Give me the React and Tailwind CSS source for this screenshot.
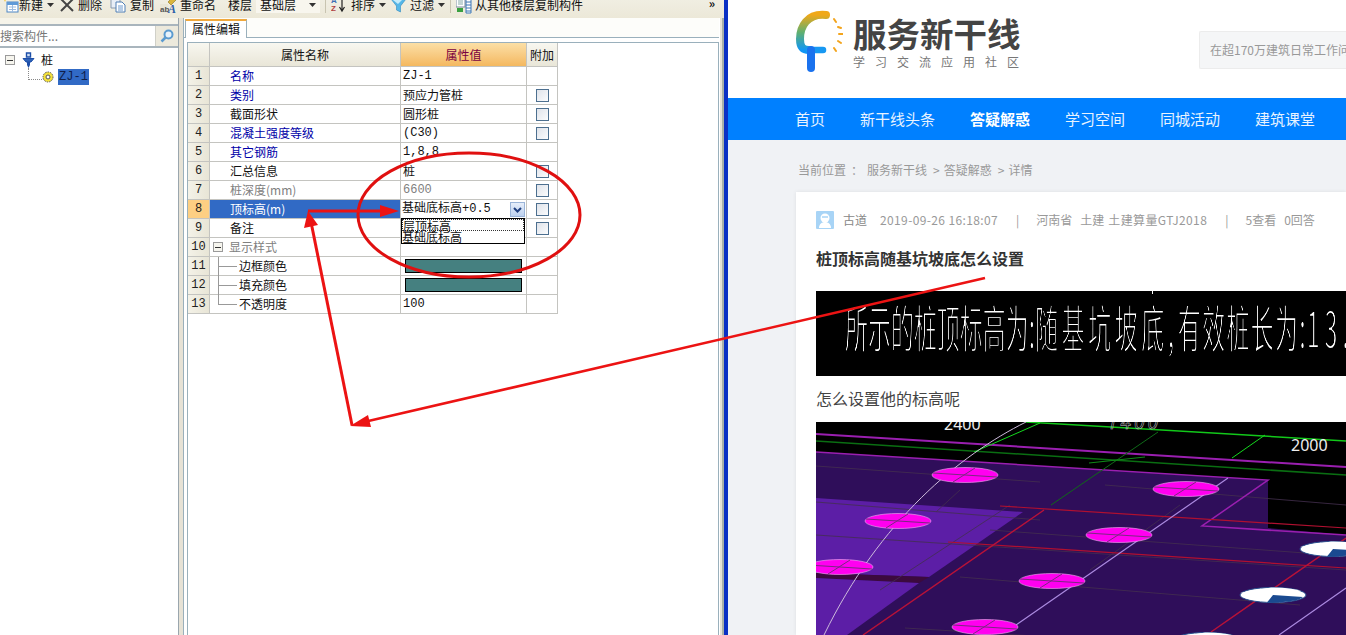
import React from "react";

const Caret = () => (
  <svg width="7" height="4" viewBox="0 0 7 4" className="shrink-0"><path d="M0 0h7L3.500 4z" fill="#333" /></svg>
);

const NewIcon = () => (
  <svg width="17" height="18" viewBox="0 0 17 18" className="shrink-0">
    <path d="M3 0l1 2 2 .5-2 1L3 6 2 3.500 0 2.500 2 2z" fill="#f2c230" />
    <rect x="5" y="6" width="11" height="10" fill="#fff" stroke="#4d86c4" />
    <rect x="5" y="6" width="11" height="3" fill="#5f9ad8" />
    <path d="M7 11h7M7 13.500h7M10.500 9v7" stroke="#9cbbe0" />
  </svg>
);
const XIcon = () => (
  <svg width="14" height="14" viewBox="0 0 14 14" className="shrink-0"><path d="M1 1l12 12M13 1L1 13" stroke="#444" strokeWidth="2" /></svg>
);
const CopyIcon = () => (
  <svg width="16" height="16" viewBox="0 0 16 16" className="shrink-0">
    <path d="M1 1h7l2 2v8H1z" fill="#e8eef6" stroke="#8a9bb0" />
    <path d="M6 5h6l3 3v7H6z" fill="#fff" stroke="#4f7fb5" />
    <path d="M8 9h5M8 11h5M8 13h5" stroke="#6d9ace" />
  </svg>
);
const RenameIcon = () => (
  <svg width="18" height="18" viewBox="0 0 18 18" className="shrink-0">
    <path d="M8 6l6-6 3 3-6 6z" fill="#d9b53d" stroke="#8c7420" strokeWidth=".6" />
    <path d="M12 0l4 4" stroke="#6ea04a" strokeWidth="1.500" />
    <rect x="0" y="8" width="8" height="9" fill="#e9e6d6" />
    <text x="0" y="16" fontSize="8" fontWeight="700" fill="#555" fontFamily="Liberation Sans">ab</text>
    <text x="8" y="17" fontSize="12" fontWeight="700" fontStyle="italic" fill="#2a5fa8" fontFamily="Liberation Serif">A</text>
  </svg>
);
const SortIcon = () => (
  <svg width="15" height="18" viewBox="0 0 15 18" className="shrink-0">
    <text x="0" y="7" fontSize="8" fontWeight="700" fill="#3a6fb5" fontFamily="Liberation Sans">A</text>
    <text x="0" y="15" fontSize="8" fontWeight="700" fill="#b04040" fontFamily="Liberation Sans">Z</text>
    <path d="M11 1v13M8.500 11l2.500 4 2.500-4" fill="none" stroke="#222" strokeWidth="1.200" />
  </svg>
);
const FilterIcon = () => (
  <svg width="15" height="15" viewBox="0 0 15 15" className="shrink-0">
    <path d="M0 1h15L9.500 8v6l-4-2V8z" fill="#55b7e8" stroke="#3289bd" strokeWidth=".6" />
    <path d="M2 2h9L7 6z" fill="#c5ecfb" />
  </svg>
);
const CopyFromIcon = () => (
  <svg width="16" height="18" viewBox="0 0 16 18" className="shrink-0">
    <rect x="0" y="1" width="9" height="10" fill="#fff" stroke="#7b8a9c" />
    <path d="M2 4h5M2 6h5M2 8h5" stroke="#8aa" />
    <path d="M1 12h6v4H1z" fill="#3aa040" />
    <path d="M10 3h5v14h-5z" fill="#fff" stroke="#3c76b5" />
    <path d="M10 6h5M10 9h5M10 12h5M10 15h5" stroke="#3c76b5" />
  </svg>
);

const Check = () => (
  <div className="w-[13px] h-[13px] border border-[#4c6f8f] bg-gradient-to-br from-[#dfe3ea] to-[#fbfcfd]" />
);

const Expander = () => (
  <div className="w-[10px] h-[10px] border border-[#9a9a9a] bg-[#f6f5ee] flex items-center justify-center shrink-0">
    <div className="w-[6px] h-px bg-[#333]" />
  </div>
);

const mono = "font-['Liberation_Mono','Noto_Sans_CJK_SC',monospace]";

const rows = [
  { n: "1", name: "名称", cls: "text-[#0000a8]", val: "ZJ-1", monoVal: true },
  { n: "2", name: "类别", cls: "text-[#0000a8]", val: "预应力管桩", check: true },
  { n: "3", name: "截面形状", cls: "text-[#111]", val: "圆形桩", check: true },
  { n: "4", name: "混凝土强度等级", cls: "text-[#0000a8]", val: "(C30)", monoVal: true, check: true },
  { n: "5", name: "其它钢筋", cls: "text-[#0000a8]", val: "1,8,8", monoVal: true },
  { n: "6", name: "汇总信息", cls: "text-[#111]", val: "桩", check: true },
  { n: "7", name: "桩深度(mm)", cls: "text-[#808080]", val: "6600", monoVal: true, gray: true, check: true },
  { n: "8", name: "顶标高(m)", selected: true, cls: "text-white", val: "基础底标高+0.5", check: true },
  { n: "9", name: "备注", cls: "text-[#111]", val: "", check: true },
  { n: "10", name: "显示样式", group: true, cls: "text-[#808080]", val: "" },
  { n: "11", name: "边框颜色", child: true, cls: "text-[#111]", swatch: true },
  { n: "12", name: "填充颜色", child: true, cls: "text-[#111]", swatch: true },
  { n: "13", name: "不透明度", child: true, last: true, cls: "text-[#111]", val: "100", monoVal: true },
];

function Toolbar() {
  return (
    <div className="h-[18px] shrink-0 flex items-start overflow-hidden bg-gradient-to-b from-[#f0eee2] to-[#ece8d8] text-[12px] leading-[12px] text-[#111] relative">
      <div className="flex items-center h-[12px] -mt-px pl-[2px]">
        <NewIcon />
        <span>新建</span>
        <span className="ml-[4px]"><Caret /></span>
        <span className="ml-[6px]"><XIcon /></span>
        <span className="ml-[4px]">删除</span>
        <span className="ml-[8px]"><CopyIcon /></span>
        <span className="ml-[4px]">复制</span>
        <span className="ml-[6px]"><RenameIcon /></span>
        <span className="ml-[2px]">重命名</span>
        <span className="ml-[12px]">楼层</span>
        <div className="ml-[4px] w-[64px] h-[16px] bg-[#f8f6ee] flex items-center pl-[4px] justify-between pr-[4px]">
          <span>基础层</span>
          <Caret />
        </div>
        <div className="ml-[5px] w-px h-[16px] bg-[#c8c4b0]" />
        <span className="ml-[5px]"><SortIcon /></span>
        <span className="ml-[5px]">排序</span>
        <span className="ml-[4px]"><Caret /></span>
        <span className="ml-[5px]"><FilterIcon /></span>
        <span className="ml-[4px]">过滤</span>
        <span className="ml-[4px]"><Caret /></span>
        <div className="ml-[5px] w-px h-[16px] bg-[#c8c4b0]" />
        <span className="ml-[5px]"><CopyFromIcon /></span>
        <span className="ml-[3px]">从其他楼层复制构件</span>
      </div>
      <span className="ml-auto mr-[9px] -mt-[3px] text-[12px] font-bold">»</span>
    </div>
  );
}

function Sidebar() {
  return (
    <div className="w-[178px] shrink-0 flex flex-col bg-white">
      <div className="h-[6px] bg-[#f6f4ea]" />
      <div className="h-[24px] flex border-y-2 border-[#a9b5bd] bg-white">
        <div className="w-[155px] flex items-center text-[12px] text-[#777]">搜索构件...</div>
        <div className="flex-1 bg-[#ece9dc] flex items-center justify-center border-l border-[#d0d0c8]">
          <svg width="14" height="14" viewBox="0 0 14 14"><circle cx="8.500" cy="5.500" r="4" fill="#e6f2fb" stroke="#5b9bd0" strokeWidth="2" /><path d="M5.500 8.500L1.500 12.500" stroke="#5b9bd0" strokeWidth="2.500" /></svg>
        </div>
      </div>
      <div className="flex items-center h-[18px] mt-[3px] pl-[5px] text-[12px] text-[#111]">
        <Expander />
        <span className="ml-[7px]">
          <svg width="13" height="16" viewBox="0 0 13 16">
            <path d="M4.500 1h4v4h-4z" fill="#cfe0f6" stroke="#1e4fa8" strokeWidth="1.400" />
            <path d="M1 6.500h11L9 10H4z" fill="#2e62b8" stroke="#1e4fa8" />
            <path d="M5 10h3v3l-1.500 3L5 13z" fill="#1e4fa8" />
          </svg>
        </span>
        <span className="ml-[6px]">桩</span>
      </div>
      <div className="flex items-center h-[16px] pl-[28px] text-[12px]">
        <div className="w-[14px] h-[12px] -mt-[7px] shrink-0 border-l border-b border-dotted border-[#888]" />
        <svg width="12" height="12" viewBox="0 0 12 12" className="shrink-0">
          <circle cx="6" cy="6" r="5" fill="#f5e23a" stroke="#555" strokeDasharray="1.500 1" />
          <circle cx="6" cy="6" r="2" fill="#fff" stroke="#555" />
        </svg>
        <div className={`ml-[4px] w-[31px] h-[16px] bg-[#316ac5] text-[#10204a] text-center leading-[16px] ${mono}`}>ZJ-1</div>
      </div>
    </div>
  );
}

function Grid() {
  return (
    <div className="grid grid-cols-[22px_191px_126px_31px] w-[370px] text-[12px] leading-[18px]">
      <div className="h-[24px] bg-gradient-to-b from-[#f8f7f0] to-[#e9e6d8] border-r border-b border-[#c4c4c0]" />
      <div className="h-[24px] bg-gradient-to-b from-[#f8f7f0] to-[#e9e6d8] border-r border-b border-[#c4c4c0] flex items-center justify-center text-[#111]">属性名称</div>
      <div className="h-[24px] bg-gradient-to-b from-[#fbdfa6] to-[#f4b85e] border-r border-b border-[#c4c4c0] flex items-center justify-center text-[#7a0040]">属性值</div>
      <div className="h-[24px] bg-gradient-to-b from-[#f8f7f0] to-[#e9e6d8] border-r border-b border-[#c4c4c0] flex items-center justify-center text-[#111]">附加</div>
      {rows.map((r) => (
        <React.Fragment key={r.n}>
          <div className={`h-[19px] border-r border-b border-[#c4c4c0] flex items-center justify-center ${r.selected ? "bg-[#fdcf83]" : "bg-gradient-to-r from-[#f4f2e8] to-[#e8e5d6]"} ${mono} text-[#222]`}>{r.n}</div>
          <div className={`h-[19px] border-r border-b border-[#c4c4c0] flex items-center ${r.selected ? "bg-[#316ac5]" : "bg-white"} ${r.cls}`}>
            {r.group ? (
              <>
                <span className="ml-[3px]"><Expander /></span>
                <span className="ml-[6px]">{r.name}</span>
              </>
            ) : r.child ? (
              <>
                <div className="ml-[8px] w-[21px] h-[19px] relative shrink-0">
                  <div className={`absolute left-0 top-0 w-px bg-[#999] ${r.last ? "h-[10px]" : "h-[19px]"}`} />
                  <div className="absolute left-0 top-[9px] w-[19px] h-px bg-[#999]" />
                </div>
                <span>{r.name}</span>
              </>
            ) : (
              <span className="ml-[20px]">{r.name}</span>
            )}
          </div>
          <div className={`h-[19px] border-r border-b border-[#c4c4c0] flex items-center bg-white relative ${r.gray ? "text-[#808080]" : "text-[#111]"} ${r.monoVal ? mono : ""}`}>
            {r.swatch ? (
              <div className="ml-[4px] w-[117px] h-[14px] bg-[#458080] border border-black" />
            ) : r.selected ? (
              <>
                <span className={`ml-px ${mono}`}>{r.val}</span>
                <div className="absolute right-[1px] top-[2px] w-[15px] h-[15px] bg-gradient-to-b from-[#e6eefa] to-[#bcd0ee] border border-[#9ab4d8] flex items-center justify-center">
                  <svg width="9" height="6" viewBox="0 0 9 6"><path d="M1 1l3.500 3.500L8 1" fill="none" stroke="#1f3f80" strokeWidth="2" /></svg>
                </div>
                <div className="absolute left-0 top-[18px] w-[124px] h-[26px] bg-white border border-black z-10 leading-[12px] text-[#111]">
                  <div className="h-[12px] border border-dotted border-[#333] overflow-visible">层顶标高</div>
                  <div className="h-[12px]">基础底标高</div>
                </div>
              </>
            ) : (
              <span className="ml-[2px]">{r.val}</span>
            )}
          </div>
          <div className="h-[19px] border-r border-b border-[#c4c4c0] flex items-center justify-center bg-white">
            {r.check && <Check />}
          </div>
        </React.Fragment>
      ))}
    </div>
  );
}

function Cad() {
  const discs = [[965, 475], [1186, 489], [898, 521], [1119, 535], [840, 567], [1052, 581], [985, 627]];
  return (
    <svg className="block mt-[14px]" width="530" height="213" viewBox="816 422 530 213">
      <rect x="816" y="422" width="530" height="213" fill="#000" />
      <path d="M816 452L1268 480V528L1346 535V635H816z" fill="#2f0e5a" />
      <path d="M816 498L1023 512L929 577L816 573z" fill="#5c1ea6" />
      <path d="M816 573L929 577L919 583L816 578z" fill="#3c0a3e" />
      <path d="M816 578L919 583L847 635H816z" fill="#5c1ea6" />
      <g stroke="#44304f" strokeWidth="1" opacity=".8">
        <path d="M816 466L1040 482M1105 485L1346 505M816 502L1040 520M816 535L1346 570M990 530L1346 556M960 577L1300 605M905 628L1100 640" />
        <path d="M960 490L936 512M1180 505L1090 570M1010 505L880 590" />
      </g>
      <path d="M816 434L1346 467" stroke="#9a1fb0" strokeWidth="2" />
      <path d="M816 452L1268 480L1202 526L1346 535" fill="none" stroke="#9a1fb0" strokeWidth="1.500" />
      <path d="M816 441L1346 475" stroke="#0a6e12" strokeWidth="1.500" />
      <path d="M1026 422L1346 441" stroke="#12c81a" strokeWidth="1.500" />
      <path d="M1040 423L974 452M1265 435L1232 458" stroke="#14d81e" />
      <path d="M1158 432L1051 505" stroke="#0f6a18" />
      <path d="M1089 463L1145 457" stroke="#0f8a18" />
      <path d="M1000 506L1346 528M948 542L1346 568" stroke="#b01030" strokeWidth="1.200" />
      <path d="M1044 510L863 635M1346 538L1211 632" stroke="#b81238" strokeWidth="1.500" />
      <path d="M1026 422C960 455 880 520 824 635" fill="none" stroke="#cdbbdc" strokeWidth="1" />
      <path d="M1228 478L1016 625M1346 588L1279 635" stroke="#ab8ae0" strokeWidth="1.200" />
      {discs.map(([x, y]) => (
        <g key={x}>
          <ellipse cx={x} cy={y} rx="33" ry="7.500" fill="#ff00f0" stroke="#f0b0f0" strokeWidth=".6" />
          <path d={`M${x - 32} ${y - 2}L${x + 32} ${y + 2}M${x - 12} ${y + 7}L${x + 10} ${y - 7}`} stroke="#7a2a80" strokeWidth="1" />
        </g>
      ))}
      {[[1333, 549], [1273, 595], [1207, 640]].map(([x, y]) => (
        <g key={x}>
          <ellipse cx={x} cy={y} rx="33" ry="7.500" fill="#fff" stroke="#28508f" />
          <path d={`M${x} ${y}L${x + 30} ${y + 2}A33 7.500 0 0 1 ${x - 6} ${y + 7.500}z`} fill="#1a4a90" />
          <path d={`M${x - 33} ${y - 2}L${x} ${y}L${x + 28} ${y - 4}A33 7.500 0 0 0 ${x - 2} ${y - 7.500}z`} fill="#fff" />
        </g>
      ))}
      <text x="944" y="430" fontSize="16" fill="#eee" fontFamily="Noto Sans">2400</text>
      <text x="1291" y="451" fontSize="16" fill="#eee" fontFamily="Noto Sans">2000</text>
      <text x="1107" y="429" fontSize="19" fontStyle="italic" fill="none" stroke="#ccc" strokeWidth=".5" letterSpacing="3" fontFamily="Noto Sans">1400</text>
    </svg>
  );
}

function Site() {
  const meta = "text-[12px] leading-[18px] text-[#999]";
  return (
    <div className="flex-1 min-w-0 flex flex-col bg-[#f0f2f5] overflow-hidden">
      <div className="h-[98px] shrink-0 bg-white flex items-start">
        <svg className="ml-[67px] mt-[10px] shrink-0" width="48" height="64" viewBox="795 10 48 64">
          <defs>
            <linearGradient id="lg" x1="0" y1="0" x2="0" y2="1">
              <stop offset="0" stopColor="#f0a818" />
              <stop offset=".5" stopColor="#60b070" />
              <stop offset="1" stopColor="#0f96f5" />
            </linearGradient>
          </defs>
          <path d="M826 15C807 13 800 27 800 39C800 47 803 50 809 50" fill="none" stroke="url(#lg)" strokeWidth="8" strokeLinecap="round" />
          <path d="M809 50H823" stroke="#1798f2" strokeWidth="6.500" strokeLinecap="round" />
          <path d="M811 50V68" stroke="#1a72ee" strokeWidth="8" strokeLinecap="round" />
          <path d="M834 19l2 3M838 27l3 1M839 34h4M838 41l3 2M834 48l2 3" stroke="#f3a41c" strokeWidth="2" strokeLinecap="round" />
        </svg>
        <div className="ml-[10px] mt-[14px] w-[170px]">
          <div className="text-[33.500px] leading-[38px] font-bold text-[#444] whitespace-nowrap">服务新干线</div>
          <div className="text-[12px] leading-[16px] mt-[2px] tracking-[10px] text-[#777] whitespace-nowrap">学习交流应用社区</div>
        </div>
        <div className="ml-[176px] mt-[31px] w-[147px] h-[38px] shrink-0 bg-[#f5f6f7] border border-r-0 border-[#ececec] rounded-l-[2px] flex items-center pl-[10px] text-[12px] text-[#999] whitespace-nowrap overflow-hidden">
          在超170万建筑日常工作问
        </div>
      </div>
      <div className="h-[42px] shrink-0 bg-[#0080ff] flex items-center pl-[67px] gap-[35px] text-[15px] text-[#e8f3ff] whitespace-nowrap">
        <span>首页</span>
        <span>新干线头条</span>
        <span className="font-bold text-white">答疑解惑</span>
        <span>学习空间</span>
        <span>同城活动</span>
        <span>建筑课堂</span>
      </div>
      <div className="h-[52px] shrink-0 pt-[22px] pl-[70px] flex items-start text-[12px] leading-[16px] text-[#999] whitespace-nowrap">
        <span>当前位置</span>
        <span className="ml-[5px] w-[16px]">：</span>
        <span>服务新干线</span>
        <span className="ml-[6px]">&gt;</span>
        <span className="ml-[4px]">答疑解惑</span>
        <span className="ml-[6px]">&gt;</span>
        <span className="ml-[4px]">详情</span>
      </div>
      <div className="flex-1 ml-[68px] bg-white pl-[20px] pt-[19px] shadow-[0_0_4px_rgba(0,0,0,0.08)] overflow-hidden">
        <div className={`flex items-center h-[18px] whitespace-nowrap ${meta}`}>
          <svg width="18" height="18" viewBox="0 0 18 18" className="shrink-0">
            <rect width="18" height="18" rx="1" fill="#a8d4f6" />
            <circle cx="9" cy="7" r="4.500" fill="#fff" />
            <path d="M3 17c0-4 3-6 6-6s6 2 6 6z" fill="#fff" />
            <path d="M6 6h6" stroke="#a8d4f6" strokeWidth="1.500" />
          </svg>
          <span className="ml-[9px] text-[#888]">古道</span>
          <span className="ml-[13px] tracking-[0.37px]">2019-09-26 16:18:07</span>
          <span className="ml-[18px]">|</span>
          <span className="ml-[17px]">河南省</span>
          <span className="ml-[8px]">土建</span>
          <span className="ml-[4px] tracking-[0.4px]">土建算量GTJ2018</span>
          <span className="ml-[18px]">|</span>
          <span className="ml-[17px]">5查看</span>
          <span className="ml-[8px]">0回答</span>
        </div>
        <div className="mt-[19px] text-[16px] leading-[20px] font-bold text-[#333] whitespace-nowrap">桩顶标高随基坑坡底怎么设置</div>
        <div className="relative mt-[23px] h-[85px] bg-black overflow-hidden pl-[29px] pt-[3px] text-white whitespace-nowrap">
          <div className="absolute left-[336px] top-0 w-px h-[3px] bg-white" />
          <span className="inline-block origin-left scale-x-[0.45] will-change-transform text-[51px] leading-[64px] [-webkit-text-stroke:2px_#000]">
            <span>所示的桩顶标高为:</span>
            <span className="tracking-[8px]">随基坑坡底,</span>
            <span className="tracking-[3px]">有效桩长为:</span>
            <span className="tracking-[11px]">13.</span>
          </span>
        </div>
        <div className="mt-[12px] text-[16px] leading-[20px] text-[#444] whitespace-nowrap">怎么设置他的标高呢</div>
        <Cad />
      </div>
    </div>
  );
}

function Overlay() {
  const red = "#ec1313";
  return (
    <svg className="absolute left-0 top-0 pointer-events-none z-20" width="1346" height="635" viewBox="0 0 1346 635">
      <ellipse cx="469" cy="215" rx="111" ry="62" fill="none" stroke="#e01010" strokeWidth="3" />
      <path d="M308 211H384" stroke={red} strokeWidth="3" />
      <path d="M399 211L380 205V217z" fill={red} />
      <path d="M311 222L352 425" stroke={red} strokeWidth="3" />
      <path d="M308 211L304 228L318 225z" fill={red} />
      <path d="M985 278L364 422" stroke={red} strokeWidth="2.500" />
      <path d="M350 426L368 415L371 427z" fill={red} />
    </svg>
  );
}

export default function App() {
  return (
    <div className="relative flex w-[1346px] h-[635px] overflow-hidden bg-white font-['Noto_Sans_CJK_SC',sans-serif]">
      <div className="w-[724px] shrink-0 flex flex-col bg-[#ece9dc]">
        <Toolbar />
        <div className="flex-1 flex min-h-0">
          <Sidebar />
          <div className="w-[5px] shrink-0 border-l border-[#9aa6ae] bg-[#e6e2d6]" />
          <div className="w-[537px] shrink-0 flex flex-col bg-white border-l border-[#9ab0bc] pl-[3px] pr-[1px]">
            <div className="h-[20px] shrink-0 pt-px border-b border-[#9ab0bc] -ml-[3px] pl-px bg-[#fdfdfa]">
              <div className="w-[62px] h-[19px] border-t-2 border-t-[#f0a83c] border-x border-x-[#9ab0bc] bg-white text-[12px] leading-[16px] text-[#111] text-center">属性编辑</div>
            </div>
            <div className="flex-1 mt-[4px] border border-[#9ab0bc] border-b-0 min-h-0">
              <Grid />
            </div>
          </div>
          <div className="w-[4px] shrink-0 bg-[#e6e2d6] border-r-2 border-[#a8b0a8]" />
        </div>
      </div>
      <div className="w-[4px] shrink-0 bg-[#0a30c4]" />
      <Site />
      <Overlay />
    </div>
  );
}
